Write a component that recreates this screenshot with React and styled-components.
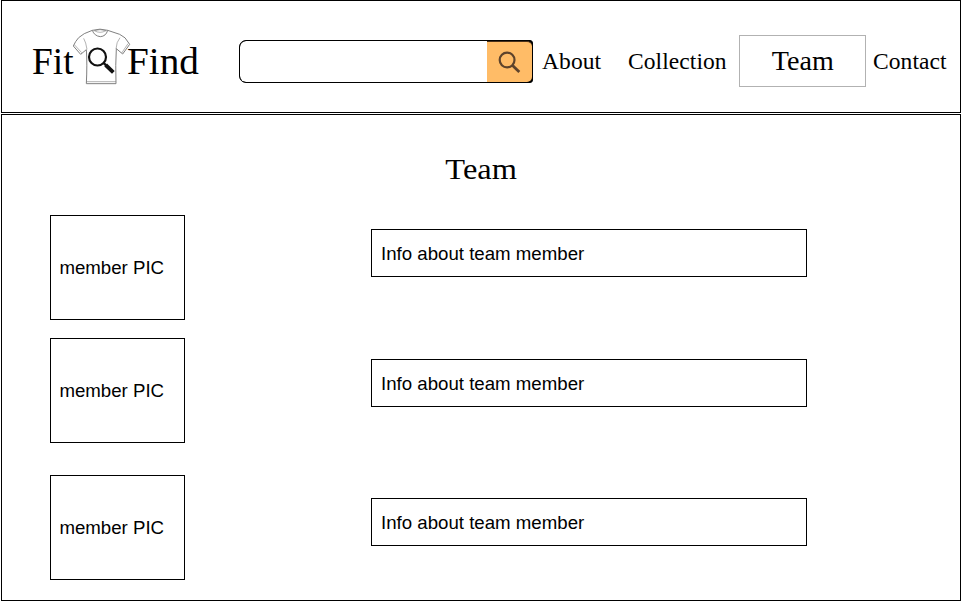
import React from "react";
import styled, { createGlobalStyle } from "styled-components";

const GlobalStyle = createGlobalStyle`
  * { box-sizing: border-box; }
  body { margin: 0; background: #fff; color: #000; }
`;

const Page = styled.div`
  width: 960px;
  padding-left: 1px;
  box-sizing: content-box;
  display: flex;
  flex-direction: column;
  gap: 1px;
`;

const Header = styled.header`
  height: 113px;
  border: 1px solid #000;
  display: flex;
  align-items: flex-start;
  font-family: "Liberation Serif", serif;
`;

const Logo = styled.div`
  display: flex;
  width: 207px;
  margin: 25px 0 0 30px;
`;

const LogoWord = styled.span`
  width: ${(p) => p.$width}px;
  padding-top: 15px;
  font-size: 37px;
  line-height: 42px;
  font-variant-ligatures: none;
  transform: scaleX(${(p) => p.$stretch});
  transform-origin: left;
  white-space: nowrap;
`;

const Shirt = styled.svg`
  flex: none;
  width: 55px;
  height: 60px;
  overflow: visible;
`;

const Search = styled.form`
  display: flex;
  width: 294px;
  height: 43px;
  margin-top: 39px;
  border: 1px solid #000;
  border-radius: 7px 3px 3px 7px;
  background: #000;
  overflow: hidden;
`;

const SearchInput = styled.input`
  width: 247px;
  border: 0;
  border-radius: 6px 0 0 6px;
  padding: 0 10px;
  background: #fff;
  outline: none;
`;

const SearchButton = styled.button`
  flex: 1;
  display: grid;
  place-items: center;
  border: 0;
  border-top: 1px solid #49301a;
  border-radius: 0 5px 5px 0;
  padding: 0;
  background: #ffbc67;
`;

const Nav = styled.nav`
  display: flex;
  align-items: flex-start;
  margin-top: 34px;
`;

const NavLink = styled.a`
  width: ${(p) => p.$width}px;
  padding: 13px 0 0 ${(p) => p.$inset}px;
  font-size: 23.5px;
  line-height: 26px;
  letter-spacing: 0.08px;
  white-space: nowrap;
`;

const ActiveLink = styled.a`
  width: 127px;
  height: 52px;
  border: 1px solid #b2b2b2;
  font-size: 27px;
  line-height: 51px;
  text-align: center;
`;

const Stretched = styled.span`
  display: inline-block;
  transform: scaleX(${(p) => p.$by});
`;

const Main = styled.main`
  height: 487px;
  border: 1px solid #000;
`;

const Title = styled.h1`
  margin: 36px 0 28px;
  text-align: center;
  font: 400 30px/36px "Liberation Serif", serif;
`;

const Member = styled.section`
  display: flex;
  align-items: flex-start;
  margin: 0 0 ${(p) => p.$gap}px 48px;
  font: 18.67px/21px "Liberation Sans", Arial, sans-serif;
`;

const Picture = styled.div`
  display: flex;
  align-items: center;
  width: 135px;
  height: 105px;
  border: 1px solid #000;
  padding-left: 8.4px;
`;

const Info = styled.div`
  display: flex;
  align-items: center;
  width: 436px;
  height: 48px;
  margin: ${(p) => p.$top}px 0 0 186px;
  border: 1px solid #000;
  padding: 1px 0 0 9px;
`;

const members = [
  { id: 1, gap: 18, top: 14 },
  { id: 2, gap: 32, top: 21 },
  { id: 3, gap: 0, top: 23 },
];

function ShirtIcon() {
  return (
    <Shirt viewBox="21 12 165 180" fill="none" aria-hidden="true">
      <g stroke="#808080" strokeWidth="3" strokeLinejoin="round">
        <path d="M82 25Q54 34 41 47Q31 58 25 72L47 97L64 83Q67 125 64 185H153Q151 128 154 80L173 96L194 67Q181 43 164 37L128 25" />
        <path d="M82 25Q105 18 128 25Q123 43 106 44Q88 42 82 25Z" />
        <path d="M88 26Q105 36 123 26M88 26Q105 20 123 26M66 82Q63 61 56 49M153 81Q154 60 165 47M28 68L50 92M170 93L189 65M65 179H153" strokeWidth="1.8" />
      </g>
      <circle cx="97.5" cy="105" r="25.5" stroke="#111" strokeWidth="6.5" />
      <path d="M115 122L124 131" stroke="#111" strokeWidth="7" />
      <path d="M122 129L145 151" stroke="#111" strokeWidth="11.5" />
    </Shirt>
  );
}

function SearchIcon() {
  return (
    <svg width="24" height="24" viewBox="0 0 24 24" fill="none" stroke="#5e432b" strokeWidth="2.2" aria-hidden="true">
      <circle cx="9.1" cy="10" r="7.4" />
      <path d="M14.3 15.3L21.3 22" strokeWidth="2.8" />
    </svg>
  );
}

export default function App() {
  return (
    <>
      <GlobalStyle />
      <Page>
        <Header>
          <Logo>
            <LogoWord $width={40} $stretch={1.01}>Fit</LogoWord>
            <ShirtIcon />
            <LogoWord $width={72} $stretch={1.06}>Find</LogoWord>
          </Logo>
          <Search>
            <SearchInput aria-label="Search" />
            <SearchButton type="button" aria-label="Submit search">
              <SearchIcon />
            </SearchButton>
          </Search>
          <Nav>
            <NavLink $width={95} $inset={9}>About</NavLink>
            <NavLink $width={111} $inset={0}>Collection</NavLink>
            <ActiveLink><Stretched $by={1.04}>Team</Stretched></ActiveLink>
            <NavLink $width={82} $inset={7}>Contact</NavLink>
          </Nav>
        </Header>
        <Main>
          <Title><Stretched $by={1.08}>Team</Stretched></Title>
          {members.map((m) => (
            <Member key={m.id} $gap={m.gap}>
              <Picture>member PIC</Picture>
              <Info $top={m.top}>Info about team member</Info>
            </Member>
          ))}
        </Main>
      </Page>
    </>
  );
}
